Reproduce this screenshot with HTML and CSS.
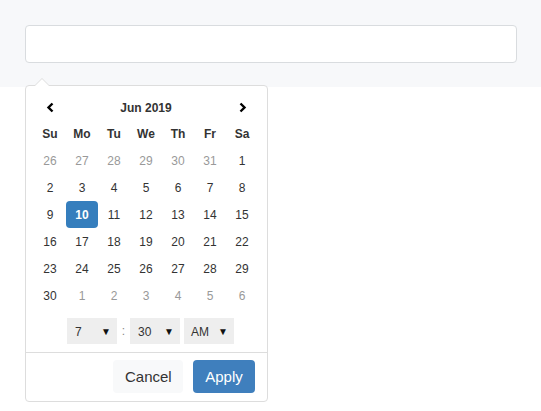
FILE: index.html
```html
<!DOCTYPE html>
<html>
<head>
<meta charset="utf-8">
<link rel="stylesheet" href="styles.css">
</head>
<body>
<div class="top">
  <div class="field"></div>
</div>
<div class="picker">
  <div class="cal">
    <div class="head">
      <span class="nav"><svg width="9" height="11" viewBox="0 0 9 11"><path d="M6.5 1.5 L2.5 5.5 L6.5 9.5" fill="none" stroke="#000" stroke-width="2.4"/></svg></span>
      <span class="month">Jun 2019</span>
      <span class="nav"><svg width="9" height="11" viewBox="0 0 9 11"><path d="M2.5 1.5 L6.5 5.5 L2.5 9.5" fill="none" stroke="#000" stroke-width="2.4"/></svg></span>
    </div>
    <div class="grid">
      <span class="wd">Su</span><span class="wd">Mo</span><span class="wd">Tu</span><span class="wd">We</span><span class="wd">Th</span><span class="wd">Fr</span><span class="wd">Sa</span>
      <span class="off">26</span><span class="off">27</span><span class="off">28</span><span class="off">29</span><span class="off">30</span><span class="off">31</span><span>1</span>
      <span>2</span><span>3</span><span>4</span><span>5</span><span>6</span><span>7</span><span>8</span>
      <span>9</span><span class="sel">10</span><span>11</span><span>12</span><span>13</span><span>14</span><span>15</span>
      <span>16</span><span>17</span><span>18</span><span>19</span><span>20</span><span>21</span><span>22</span>
      <span>23</span><span>24</span><span>25</span><span>26</span><span>27</span><span>28</span><span>29</span>
      <span>30</span><span class="off">1</span><span class="off">2</span><span class="off">3</span><span class="off">4</span><span class="off">5</span><span class="off">6</span>
    </div>
    <div class="time">
      <div class="select"><span>7</span><span class="tri">▼</span></div>
      <span class="colon">:</span>
      <div class="select"><span>30</span><span class="tri">▼</span></div>
      <div class="select ampm"><span>AM</span><span class="tri">▼</span></div>
    </div>
  </div>
  <div class="buttons">
    <button class="btn cancel">Cancel</button>
    <button class="btn apply">Apply</button>
  </div>
</div>
</body>
</html>
```
FILE: styles.css
```css
html, body {
  margin: 0;
  padding: 0;
  background: #fff;
  font-family: "Liberation Sans", Arial, sans-serif;
  color: #333;
}
.top {
  background: #f7f8fa;
  padding: 25px 24px 24px 25px;
}
.field {
  height: 36px;
  background: #fff;
  border: 1px solid #d9dcdf;
  border-radius: 4px;
}
.picker {
  position: absolute;
  left: 25px;
  top: 85px;
  width: 241px;
  background: #fff;
  border: 1px solid #ddd;
  border-radius: 4px;
}
.picker::before {
  content: "";
  position: absolute;
  left: 8px;
  top: -8px;
  border-left: 8px solid transparent;
  border-right: 8px solid transparent;
  border-bottom: 8px solid #ddd;
}
.picker::after {
  content: "";
  position: absolute;
  left: 9px;
  top: -7px;
  border-left: 7px solid transparent;
  border-right: 7px solid transparent;
  border-bottom: 7px solid #fff;
}
.cal {
  padding: 8px 9px 0 8px;
}
.head {
  display: flex;
  align-items: center;
  height: 26px;
  padding-top: 1px;
  box-sizing: border-box;
  font-size: 12px;
  font-weight: bold;
}
.nav {
  width: 32px;
  display: flex;
  justify-content: center;
  align-items: center;
}
.month {
  flex: 1;
  text-align: center;
}
.grid {
  display: grid;
  grid-template-columns: repeat(7, 32px);
  grid-auto-rows: 27px;
  font-size: 12px;
}
.grid span {
  display: flex;
  align-items: center;
  justify-content: center;
  border-radius: 4px;
  padding-top: 1px;
}
.grid .wd {
  font-weight: bold;
}
.grid .off {
  color: #999;
}
.grid .sel {
  background: #357ebd;
  color: #fff;
  font-weight: bold;
}
.time {
  display: flex;
  align-items: center;
  margin: 9px 0 8px 33px;
  height: 26px;
  font-size: 12px;
}
.select {
  width: 50px;
  height: 26px;
  box-sizing: border-box;
  background: #eee;
  display: flex;
  align-items: center;
  justify-content: space-between;
  padding: 1px 6px 0 8px;
}
.ampm {
  margin-left: 4px;
  padding-left: 7px;
}
.tri {
  font-size: 10px;
  color: #111;
}
.colon {
  width: 13px;
  text-align: center;
  color: #888;
}
.buttons {
  border-top: 1px solid #ddd;
  padding: 7px 12px 8px 8px;
  display: flex;
  justify-content: flex-end;
  gap: 10px;
}
.btn {
  font-family: "Liberation Sans", Arial, sans-serif;
  font-size: 15px;
  height: 33px;
  border: none;
  border-radius: 4px;
  padding: 0 12px;
  margin: 0;
}
.cancel {
  width: 70px;
  background: #f8f9fa;
  color: #333;
}
.apply {
  width: 62px;
  background: #3f7fbd;
  color: #fff;
}
```
